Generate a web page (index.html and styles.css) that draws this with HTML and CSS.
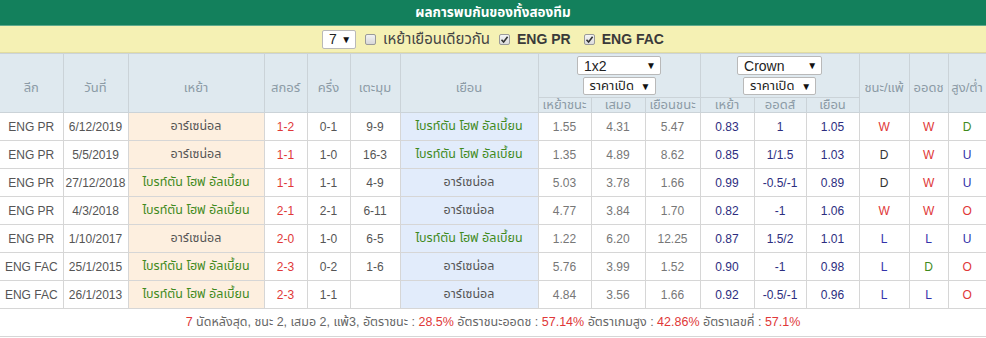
FILE: index.html
```html
<!DOCTYPE html>
<html lang="th">
<head>
<meta charset="utf-8">
<title>ผลการพบกันของทั้งสองทีม</title>
<link rel="stylesheet" href="styles.css">
</head>
<body>
<div class="panel">
  <div class="title">ผลการพบกันของทั้งสองทีม</div>
  <div class="filters">
    <span class="sel sel-n">7 <span class="arr">▼</span></span>
    <label class="chk"><span class="box"></span>เหย้าเยือนเดียวกัน</label>
    <label class="chk bold"><span class="box on"><svg viewBox="0 0 9 9" width="9" height="9"><path d="M1.5 4.8 L3.6 7 L7.6 1.8" fill="none" stroke="#333" stroke-width="1.6"/></svg></span>ENG PR</label>
    <label class="chk bold"><span class="box on"><svg viewBox="0 0 9 9" width="9" height="9"><path d="M1.5 4.8 L3.6 7 L7.6 1.8" fill="none" stroke="#333" stroke-width="1.6"/></svg></span>ENG FAC</label>
  </div>
  <table class="grid">
    <colgroup>
      <col style="width:63px"><col style="width:65px"><col style="width:136px"><col style="width:43px"><col style="width:43px"><col style="width:50px"><col style="width:138px">
      <col style="width:53px"><col style="width:54px"><col style="width:55px"><col style="width:54px"><col style="width:52px"><col style="width:53px">
      <col style="width:50px"><col style="width:39px"><col style="width:38px">
    </colgroup>
    <thead>
      <tr class="h1">
        <th rowspan="2" class="rs">ลีก</th><th rowspan="2" class="rs">วันที่</th><th rowspan="2" class="rs">เหย้า</th><th rowspan="2" class="rs">สกอร์</th><th rowspan="2" class="rs">ครึ่ง</th><th rowspan="2" class="rs">เตะมุม</th><th rowspan="2" class="rs">เยือน</th>
        <th colspan="3" class="selcell"><span class="sel sel-a">1x2 <span class="arr">▼</span></span><span class="sel sel-b">ราคาเปิด <span class="arr">▼</span></span></th>
        <th colspan="3" class="selcell"><span class="sel sel-c">Crown <span class="arr">▼</span></span><span class="sel sel-b">ราคาเปิด <span class="arr">▼</span></span></th>
        <th rowspan="2" class="rs">ชนะ/แพ้</th><th rowspan="2" class="rs">ออดช</th><th rowspan="2" class="rs">สูง/ต่ำ</th>
      </tr>
      <tr class="h2">
        <th>เหย้าชนะ</th><th>เสมอ</th><th>เยือนชนะ</th><th>เหย้า</th><th>ออดส์</th><th>เยือน</th>
      </tr>
    </thead>
    <tbody>
      <tr><td>ENG PR</td><td>6/12/2019</td><td class="home">อาร์เซน่อล</td><td class="red">1-2</td><td>0-1</td><td>9-9</td><td class="away team">ไบรท์ตัน โฮฟ อัลเบี้ยน</td><td class="g">1.55</td><td class="g">4.31</td><td class="g">5.47</td><td class="b">0.83</td><td class="b">1</td><td class="b">1.05</td><td class="red">W</td><td class="red">W</td><td class="grn">D</td></tr>
      <tr><td>ENG PR</td><td>5/5/2019</td><td class="home">อาร์เซน่อล</td><td class="red">1-1</td><td>1-0</td><td>16-3</td><td class="away team">ไบรท์ตัน โฮฟ อัลเบี้ยน</td><td class="g">1.35</td><td class="g">4.89</td><td class="g">8.62</td><td class="b">0.85</td><td class="b">1/1.5</td><td class="b">1.03</td><td class="dk">D</td><td class="red">W</td><td class="u">U</td></tr>
      <tr><td>ENG PR</td><td>27/12/2018</td><td class="home team">ไบรท์ตัน โฮฟ อัลเบี้ยน</td><td class="red">1-1</td><td>1-1</td><td>4-9</td><td class="away">อาร์เซน่อล</td><td class="g">5.03</td><td class="g">3.78</td><td class="g">1.66</td><td class="b">0.99</td><td class="b">-0.5/-1</td><td class="b">0.89</td><td class="dk">D</td><td class="red">W</td><td class="u">U</td></tr>
      <tr><td>ENG PR</td><td>4/3/2018</td><td class="home team">ไบรท์ตัน โฮฟ อัลเบี้ยน</td><td class="red">2-1</td><td>2-1</td><td>6-11</td><td class="away">อาร์เซน่อล</td><td class="g">4.77</td><td class="g">3.84</td><td class="g">1.70</td><td class="b">0.82</td><td class="b">-1</td><td class="b">1.06</td><td class="red">W</td><td class="red">W</td><td class="red">O</td></tr>
      <tr><td>ENG PR</td><td>1/10/2017</td><td class="home">อาร์เซน่อล</td><td class="red">2-0</td><td>1-0</td><td>6-5</td><td class="away team">ไบรท์ตัน โฮฟ อัลเบี้ยน</td><td class="g">1.22</td><td class="g">6.20</td><td class="g">12.25</td><td class="b">0.87</td><td class="b">1.5/2</td><td class="b">1.01</td><td class="u">L</td><td class="u">L</td><td class="u">U</td></tr>
      <tr><td>ENG FAC</td><td>25/1/2015</td><td class="home team">ไบรท์ตัน โฮฟ อัลเบี้ยน</td><td class="red">2-3</td><td>0-2</td><td>1-6</td><td class="away">อาร์เซน่อล</td><td class="g">5.76</td><td class="g">3.99</td><td class="g">1.52</td><td class="b">0.90</td><td class="b">-1</td><td class="b">0.98</td><td class="u">L</td><td class="grn">D</td><td class="red">O</td></tr>
      <tr><td>ENG FAC</td><td>26/1/2013</td><td class="home team">ไบรท์ตัน โฮฟ อัลเบี้ยน</td><td class="red">2-3</td><td>1-1</td><td></td><td class="away">อาร์เซน่อล</td><td class="g">4.84</td><td class="g">3.56</td><td class="g">1.66</td><td class="b">0.92</td><td class="b">-0.5/-1</td><td class="b">0.96</td><td class="u">L</td><td class="u">L</td><td class="red">O</td></tr>
    </tbody>
    <tfoot>
      <tr><td colspan="16" class="foot"><span class="red">7</span> นัดหลังสุด, ชนะ 2, เสมอ 2, แพ้3, อัตราชนะ : <span class="red">28.5%</span> อัตราชนะออดช : <span class="red">57.14%</span> อัตราเกมสูง : <span class="red">42.86%</span> อัตราเลขคี่ : <span class="red">57.1%</span></td></tr>
    </tfoot>
  </table>
</div>
</body>
</html>
```
FILE: styles.css
```css
html, body {
  margin: 0;
  padding: 0;
  background: #fff;
}
body {
  font-family: "Liberation Sans", Arial, "Noto Sans Thai", "Noto Sans", sans-serif;
  font-size: 12px;
  color: #444;
}
.panel {
  width: 986px;
}
.title {
  height: 25px;
  line-height: 25px;
  background: #13805c;
  border-bottom: 1px solid #5fa98c;
  color: #fff;
  font-weight: bold;
  font-size: 13.5px;
  text-align: center;
}
.filters {
  height: 27px;
  background: #f5f1b4;
  border-bottom: 1px solid #e2dca0;
  display: flex;
  align-items: center;
  justify-content: center;
  font-size: 15px;
  color: #444;
  box-sizing: border-box;
}
.sel {
  display: inline-flex;
  align-items: center;
  justify-content: space-between;
  background: #fff;
  border: 1px solid #b9b9b9;
  border-radius: 2px;
  box-sizing: border-box;
  color: #222;
  font-size: 14px;
  font-weight: normal;
  padding: 0 4px 0 6px;
  height: 18px;
}
.arr {
  font-size: 10px;
  color: #111;
}
.sel-n {
  width: 34px;
  height: 19px;
  margin-right: 9px;
}
.chk {
  display: inline-flex;
  align-items: center;
  gap: 7px;
  margin-right: 9px;
}
.chk.bold {
  font-weight: bold;
  color: #3a3a3a;
  font-size: 14px;
  margin-right: 13px;
}
.chk.bold:last-child {
  margin-right: 0;
}
.box {
  display: inline-flex;
  align-items: center;
  justify-content: center;
  width: 11px;
  height: 11px;
  border: 1px solid #9a9a9a;
  border-radius: 2px;
  background: linear-gradient(#f2f2f2, #d8d8d8);
  box-sizing: border-box;
}
.box.on {
  background: linear-gradient(#f4f4f4, #dcdcdc);
}
.grid {
  width: 986px;
  border-collapse: collapse;
  table-layout: fixed;
}
.grid th {
  background: #dfe9ef;
  color: #8c9ba6;
  font-weight: normal;
  font-size: 13px;
  border: 1px solid #cbd3d8;
  padding: 0;
  text-align: center;
}
.grid th.rs {
  padding-top: 9px;
}
.grid tr.h1 th {
  height: 43px;
}
.grid tr.h2 th {
  height: 14px;
  line-height: 14px;
  vertical-align: middle;
}
.grid tr:first-child th:first-child {
  border-left: none;
}
.selcell {
  padding-top: 1px;
}
.selcell .sel {
  display: flex;
  margin: 0 auto;
}
.sel-a {
  width: 84px;
  margin-bottom: 2px !important;
}
.sel-c {
  width: 85px;
  margin-bottom: 2px !important;
}
.sel-b {
  width: 73px;
  height: 18px;
  font-size: 13px;
}
.sel-a, .sel-c {
  height: 19px;
}
.grid td {
  height: 27px;
  border: 1px solid #d6d6d6;
  padding: 0;
  text-align: center;
  font-size: 12px;
  color: #555;
  white-space: nowrap;
}
.grid tbody tr td:first-child {
  border-left: none;
}
.home {
  background: #fdefdf;
}
.away {
  background: #e2ecfb;
}
.grid td.home, .grid td.away {
  font-size: 12.5px;
}
.grid td.team {
  color: #3f8a1c;
}
.grid .red {
  color: #e03838;
}
.grid td.g {
  color: #777;
}
.grid td.b {
  color: #2d2d80;
}
.grid td.dk {
  color: #333;
}
.grid td.grn {
  color: #3f8a1c;
}
.grid td.u {
  color: #3333aa;
}
.grid td.foot {
  height: 27px;
  border-left: none;
  border-right: none;
  color: #666;
  font-size: 12.5px;
}
```
